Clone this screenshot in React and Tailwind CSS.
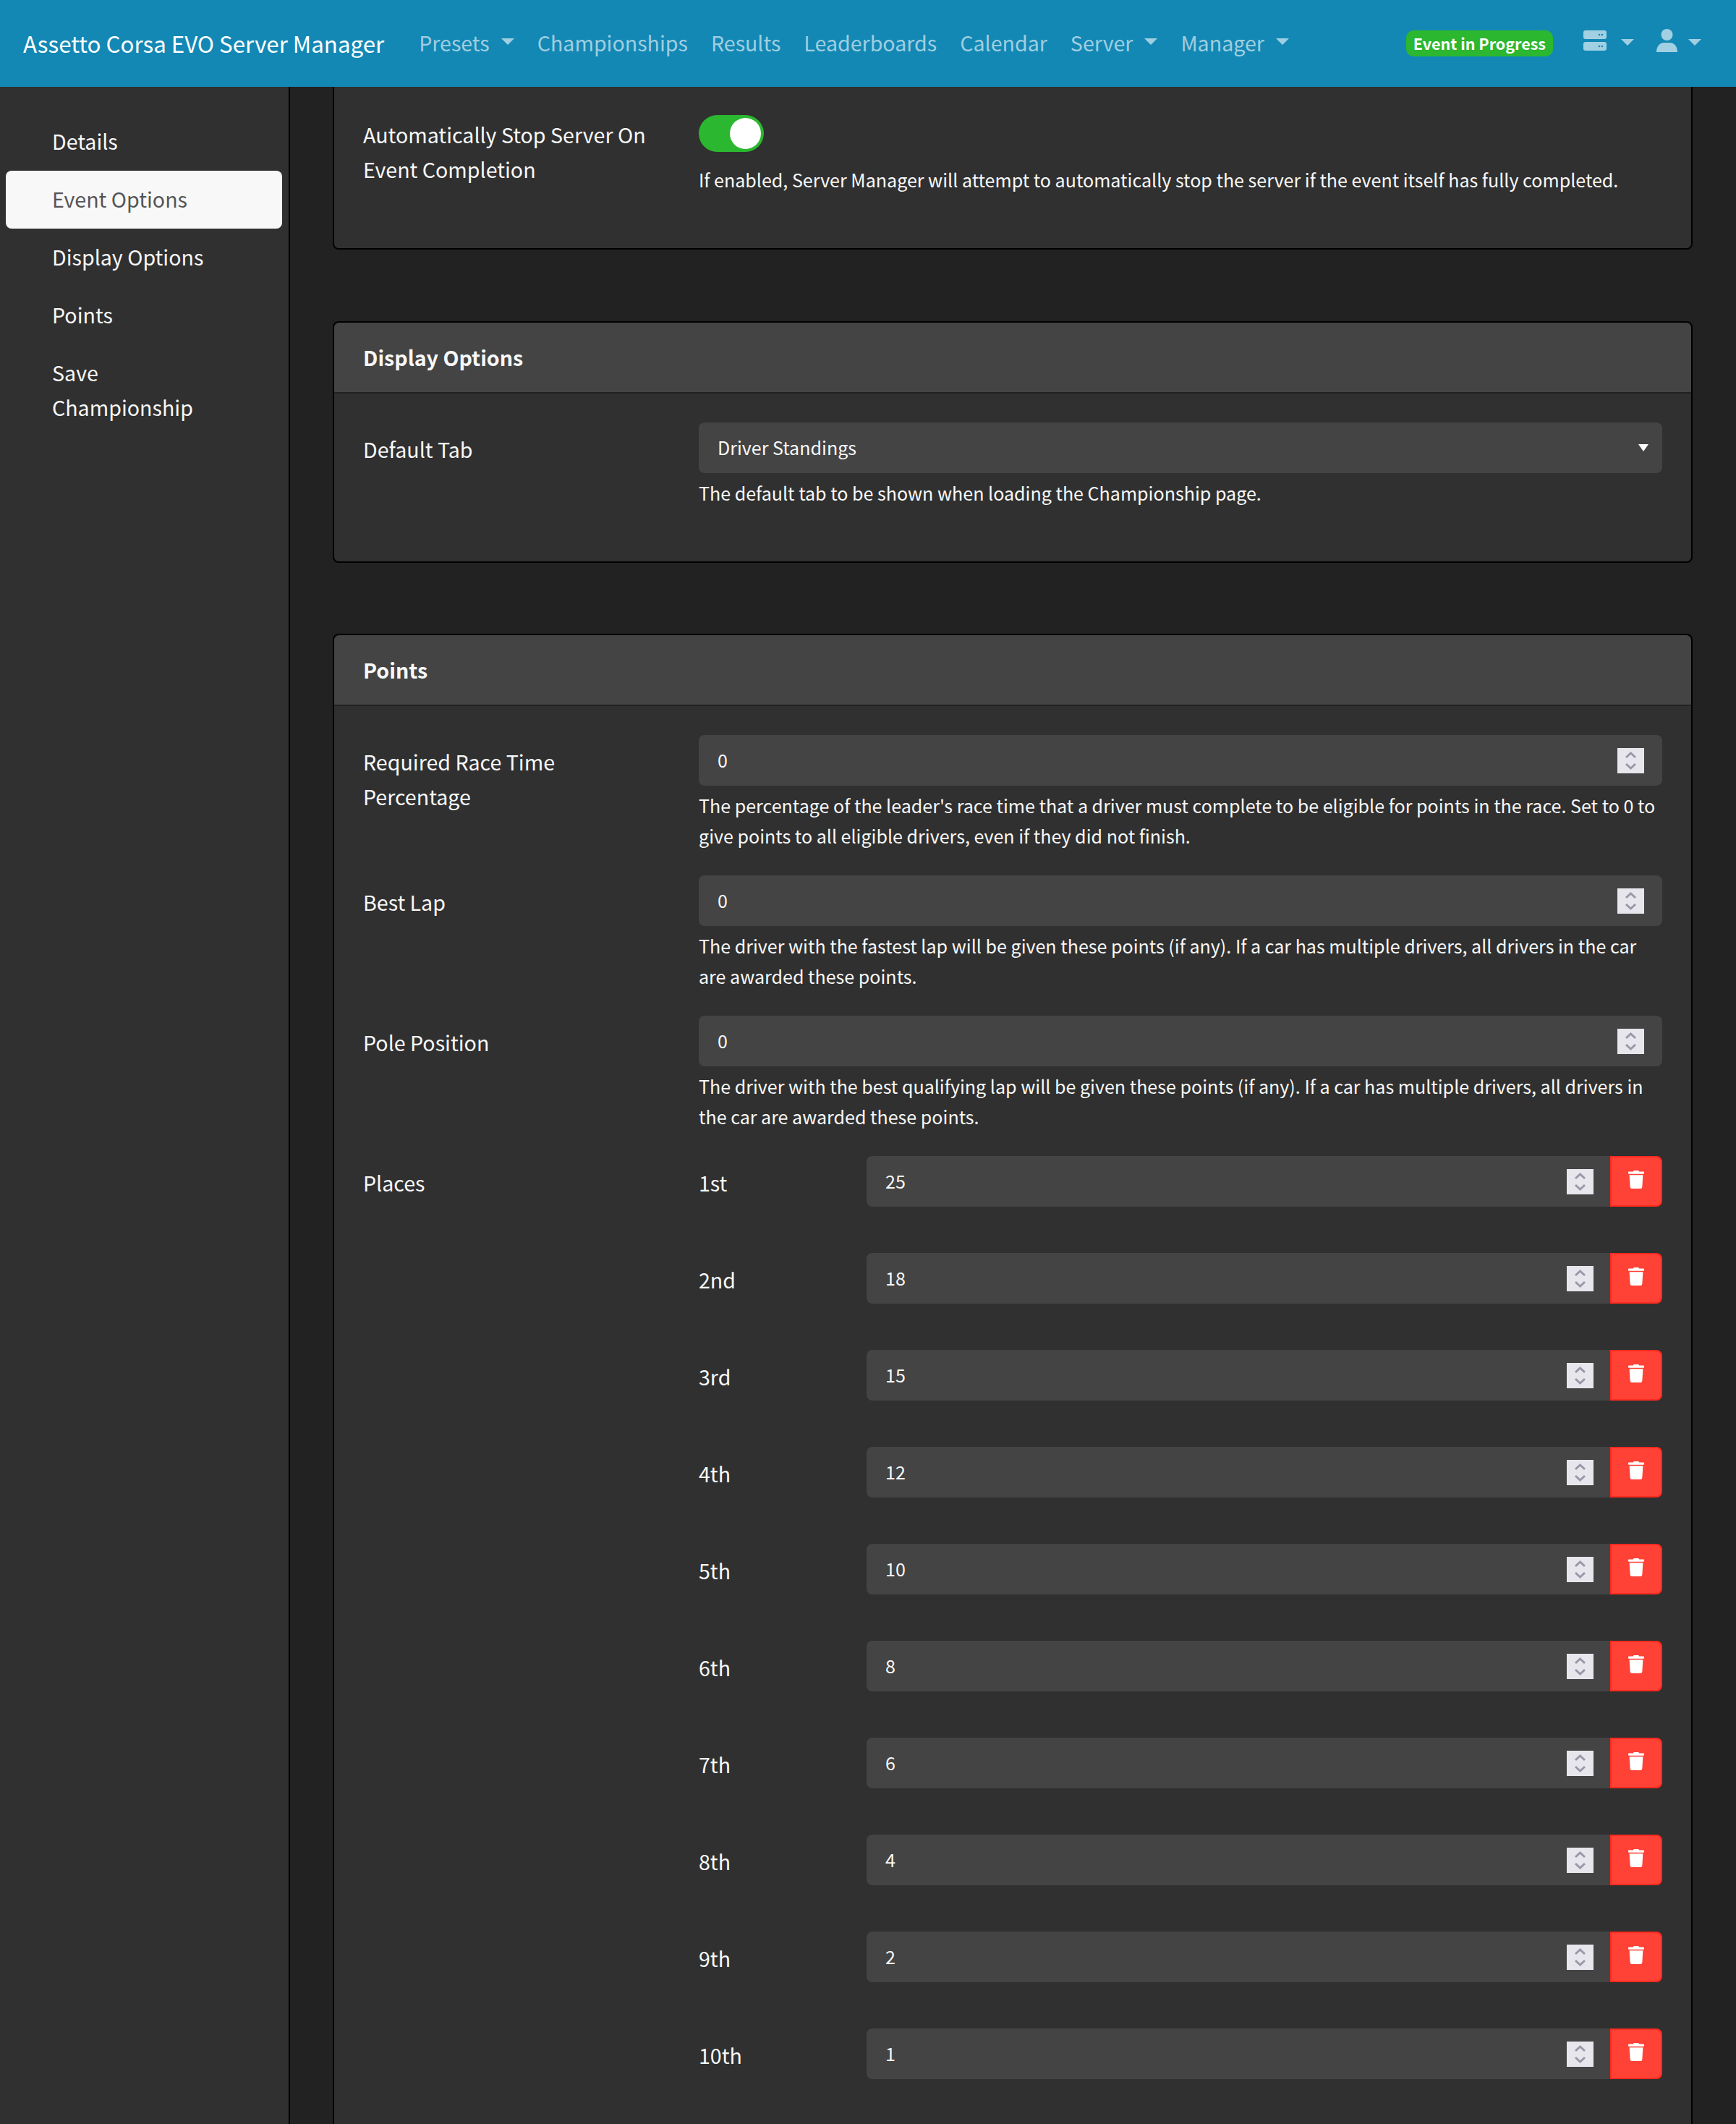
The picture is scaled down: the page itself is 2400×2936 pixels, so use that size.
import React from "react";
import { FaTrash } from "react-icons/fa";

const font = "font-['Noto_Sans_CJK_SC','Noto_Sans',sans-serif]";

const navItems = [
  { label: "Presets", caret: true },
  { label: "Championships" },
  { label: "Results" },
  { label: "Leaderboards" },
  { label: "Calendar" },
  { label: "Server", caret: true },
  { label: "Manager", caret: true },
];

const places = [
  ["1st", 25],
  ["2nd", 18],
  ["3rd", 15],
  ["4th", 12],
  ["5th", 10],
  ["6th", 8],
  ["7th", 6],
  ["8th", 4],
  ["9th", 2],
  ["10th", 1],
];

const Caret = ({ className = "ml-4 -mt-[2px]" }) => (
  <span className={`w-0 h-0 border-x-[9.6px] border-x-transparent border-t-[9.6px] border-t-white/60 ${className}`} />
);

const Spinner = () => (
  <svg width="37" height="35" viewBox="0 0 37 35" className="bg-[#e6e6ec] shrink-0">
    <polyline points="12,13 18.5,7 25,13" fill="none" stroke="#9a98a8" strokeWidth="3" />
    <polyline points="12,22 18.5,28 25,22" fill="none" stroke="#9a98a8" strokeWidth="3" />
  </svg>
);

const NumberInput = ({ value, className = "rounded-lg pr-[25px]" }) => (
  <div className={`flex-1 h-[70px] bg-[#444] flex items-center justify-between pl-[26px] text-[25.06px] text-[#f8f8f8] ${className}`}>
    <span>{value}</span>
    <Spinner />
  </div>
);

const Help = ({ children }) => (
  <p className="mt-[6px] pb-[2px] text-[25.06px] leading-[42px] text-[#f8f8f8]">{children}</p>
);

const Row = ({ label, labelClass = "pt-[13px]", children }) => (
  <div className="flex mb-8">
    <div className={`w-[464px] shrink-0 pr-12 text-[28.6px] leading-[48px] text-[#f8f8f8] ${labelClass}`}>{label}</div>
    <div className="flex-1 min-w-0">{children}</div>
  </div>
);

const Card = ({ title, children }) => (
  <div className="border-2 border-black rounded-lg bg-[#303030] mb-[98px]">
    <div className="h-[98px] px-10 flex items-center bg-[#444] border-b-2 border-[#222] rounded-t-lg text-[28.6px] font-bold text-[#f8f8f8]">
      {title}
    </div>
    <div className="pt-10 px-10 pb-10">{children}</div>
  </div>
);

export default function App() {
  return (
    <div className={`w-[2400px] h-[2936px] overflow-hidden flex flex-col bg-[#222] ${font}`}>
      <header className="h-[120px] shrink-0 bg-[#1388b5] flex items-center pl-8 pr-12 text-[28.6px] whitespace-nowrap">
        <span className="text-[31.3px] text-white mr-8">Assetto Corsa EVO Server Manager</span>
        <nav className="flex items-center pb-[2px]">
          {navItems.map((item) => (
            <a key={item.label} className="px-4 flex items-center text-white/60">
              {item.label}
              {item.caret && <Caret />}
            </a>
          ))}
        </nav>
        <div className="ml-auto flex items-center">
          <span className="h-9 px-[10px] flex items-center rounded-[10px] bg-[#2bb72f] text-white text-[21.5px] font-bold">
            Event in Progress
          </span>
          <svg width="32" height="28" viewBox="0 0 32 28" className="ml-[42px] -mt-[8px]">
            <rect x="0" y="0" width="32" height="12" rx="3" fill="#a2d0e3" />
            <rect x="0" y="16" width="32" height="12" rx="3" fill="#a2d0e3" />
            <circle cx="22" cy="6" r="1.3" fill="#1388b5" />
            <circle cx="26" cy="6" r="1.3" fill="#1388b5" />
            <circle cx="22" cy="22" r="1.3" fill="#1388b5" />
            <circle cx="26" cy="22" r="1.3" fill="#1388b5" />
          </svg>
          <Caret className="ml-5 -mt-[4px]" />
          <svg width="29" height="32" viewBox="0 0 29 32" className="ml-[31px] -mt-[8px]">
            <circle cx="14.5" cy="8" r="8" fill="#a2d0e3" />
            <path d="M0 32 C0 24 5 19 10 19 H19 C24 19 29 24 29 32 Z" fill="#a2d0e3" />
          </svg>
          <Caret className="ml-[15px] -mt-[4px]" />
        </div>
      </header>

      <div className="flex-1 flex min-h-0">
        <aside className="w-[401px] shrink-0 bg-[#303030] border-r-2 border-black pt-9 pl-2 pr-[9px] text-[28.6px] leading-[48px] text-[#f8f8f8]">
          <a className="block px-16 pt-[15px] pb-[17px]">Details</a>
          <a className="block px-16 pt-[15px] pb-[17px] bg-[#f8f8f8] text-[#555] rounded-lg">Event Options</a>
          <a className="block px-16 pt-[15px] pb-[17px]">Display Options</a>
          <a className="block px-16 pt-[15px] pb-[17px]">Points</a>
          <a className="block px-16 pt-[15px] pb-[17px]">
            Save
            <br />
            Championship
          </a>
        </aside>

        <main className="flex-1 min-w-0 pl-[59px] pr-[60px]">
          {/* scrolled card, top edge is under the navbar */}
          <div className="border-x-2 border-b-2 border-black rounded-b-lg bg-[#303030] mb-[99px] px-10 pt-[39px] pb-10">
            <Row label="Automatically Stop Server On Event Completion" labelClass="pt-[3px]">
              <div className="w-[90px] h-[51px] rounded-full bg-[#2bb72f] flex items-center justify-end pr-1">
                <div className="w-[43px] h-[43px] rounded-full bg-white" />
              </div>
              <p className="mt-[17px] pb-[2px] text-[25.06px] leading-[42px] text-[#f8f8f8]">
                If enabled, Server Manager will attempt to automatically stop the server if the event itself has fully completed.
              </p>
            </Row>
          </div>

          <Card title="Display Options">
            <Row label="Default Tab">
              <div className="h-[70px] rounded-lg bg-[#444] flex items-center justify-between pl-[26px] pr-[19px] text-[25.06px] text-[#f8f8f8]">
                Driver Standings
                <span className="w-0 h-0 border-x-[7px] border-x-transparent border-t-[10px] border-t-white" />
              </div>
              <Help>The default tab to be shown when loading the Championship page.</Help>
            </Row>
          </Card>

          <Card title="Points">
            <Row label="Required Race Time Percentage">
              <div className="flex"><NumberInput value={0} /></div>
              <Help>
                The percentage of the leader's race time that a driver must complete to be eligible for points in the race. Set to 0 to give points to all eligible drivers, even if they did not finish.
              </Help>
            </Row>
            <Row label="Best Lap">
              <div className="flex"><NumberInput value={0} /></div>
              <Help>
                The driver with the fastest lap will be given these points (if any). If a car has multiple drivers, all drivers in the car are awarded these points.
              </Help>
            </Row>
            <Row label="Pole Position">
              <div className="flex"><NumberInput value={0} /></div>
              <Help>
                The driver with the best qualifying lap will be given these points (if any). If a car has multiple drivers, all drivers in the car are awarded these points.
              </Help>
            </Row>
            <Row label="Places">
              {places.map(([name, pts]) => (
                <div key={name} className="flex mb-16">
                  <div className="w-[232px] shrink-0 pt-[13px] text-[28.6px] leading-[48px] text-[#f8f8f8]">{name}</div>
                  <NumberInput value={pts} className="rounded-l-lg pr-[23px]" />
                  <button className="w-[72px] h-[70px] shrink-0 bg-[#ff4136] border-2 border-[#ff2b1f] rounded-r-lg flex items-start justify-center pt-[18px] text-white">
                    <FaTrash className="w-[22px] h-[25px]" />
                  </button>
                </div>
              ))}
            </Row>
          </Card>
        </main>
      </div>
    </div>
  );
}
